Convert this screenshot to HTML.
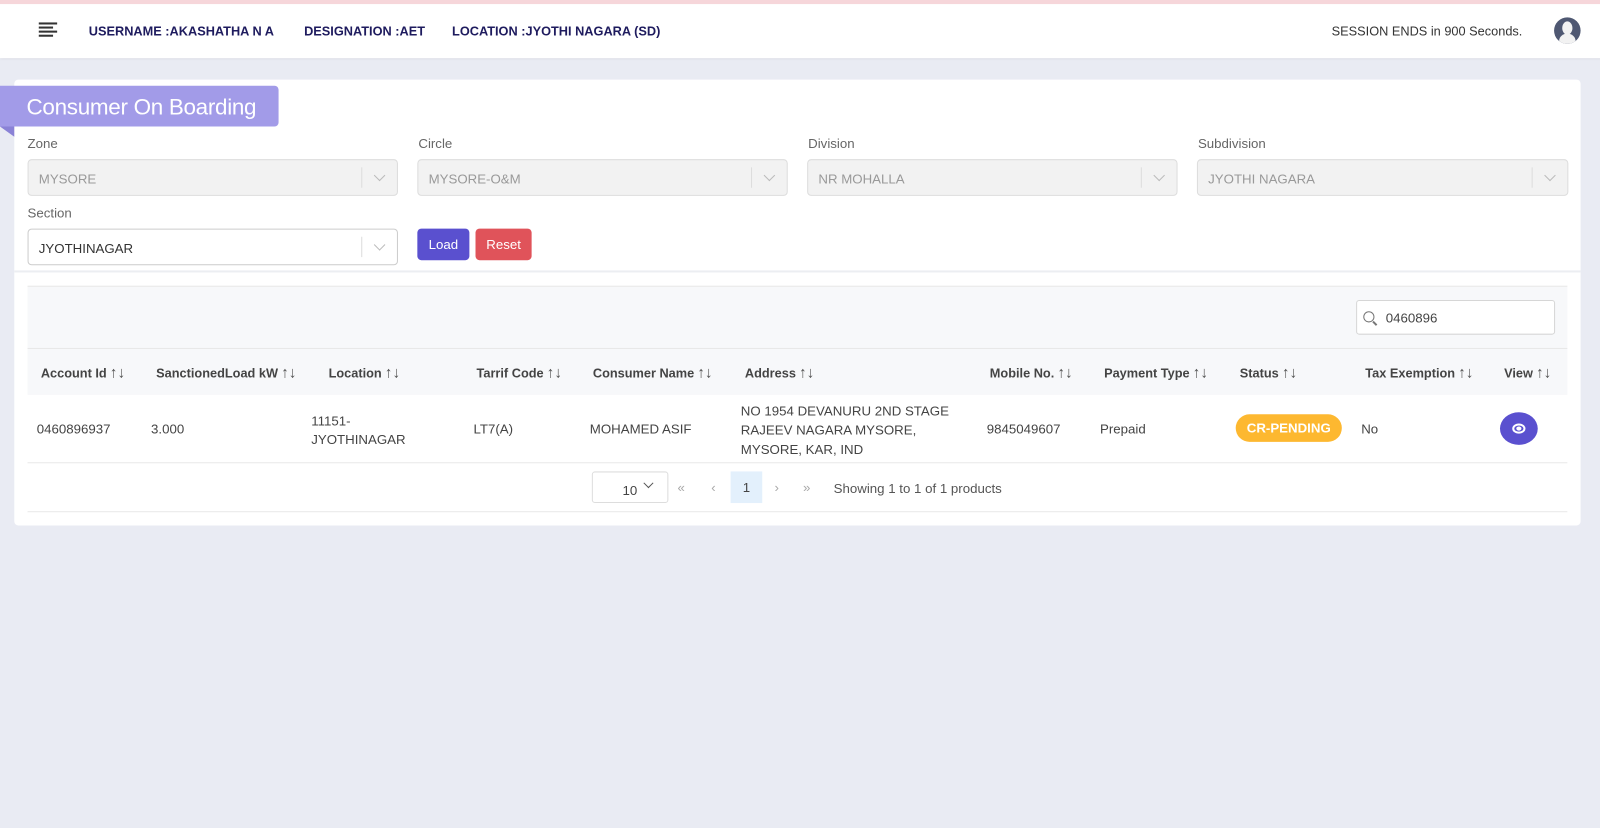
<!DOCTYPE html>
<html><head><meta charset="utf-8"><style>
*{box-sizing:border-box;margin:0;padding:0}
body{width:1600px;height:827px;background:#e9ebf3;font-family:"Liberation Sans",sans-serif;position:relative;overflow:hidden;font-size:13px;color:#333}
#w{position:absolute;left:0;top:0;width:1568px;height:811px;transform:scale(1.0204);transform-origin:0 0}
.a{position:absolute}
.hdr{left:0;top:0;width:1600px;height:57px;background:#fff;border-top:4px solid #f6d6da;box-shadow:0 1px 3px rgba(0,0,0,.08)}
.nav{font-weight:bold;color:#1e1b5e;font-size:12.5px;top:24px}
.card{left:14px;top:78px;width:1535px;height:437px;background:#fff;border-radius:4px}
.lbl{font-size:13px;color:#666}
.sel{height:36px;border:1px solid #ddd;border-radius:4px;background:#f2f2f2;color:#999;font-size:13px;padding:11px 10px}
.sel:after{content:"";position:absolute;right:34px;top:7px;width:1px;height:20px;background:#ddd}
.chev{position:absolute;right:13px;top:11px;width:8px;height:8px;border-right:1px solid #bbb;border-bottom:1px solid #bbb;transform:rotate(45deg)}
.th{top:357px;font-weight:bold;font-size:12.5px;color:#444}
.th b{font-size:15px;font-weight:normal;color:#555;margin-left:3px}
.td{font-size:13px;color:#444}
</style></head><body><div id="w">
<div class="a hdr"></div>
<div class="a" style="left:38px;top:22px;width:18px">
<div style="height:2px;background:#333;margin-bottom:2px"></div><div style="height:2px;background:#333;width:14px;margin-bottom:2px"></div><div style="height:2px;background:#333;margin-bottom:2px"></div><div style="height:2px;background:#333;width:14px"></div></div>
<div class="a nav" style="left:87px">USERNAME :AKASHATHA N A</div>
<div class="a nav" style="left:298px">DESIGNATION :AET</div>
<div class="a nav" style="left:443px">LOCATION :JYOTHI NAGARA (SD)</div>
<div class="a" style="left:1305px;top:24px;font-size:12.5px;color:#333">SESSION ENDS in 900 Seconds.</div>
<div class="a" style="left:1523px;top:17px;width:26px;height:26px;border-radius:50%;background:#4f5872;overflow:hidden"><div class="a" style="left:8px;top:4px;width:10px;height:13px;border-radius:50%;background:#f2f2f2"></div><div class="a" style="left:5px;top:16px;width:16px;height:14px;border-radius:50% 50% 0 0;background:#f2f2f2"></div></div>

<div class="a card"></div>
<div class="a" style="left:0;top:84px;width:273px;height:40px;background:#a29be8;border-radius:0 4px 4px 0;color:#fff;font-size:22px;padding:8px 0 0 26px;letter-spacing:-0.3px">Consumer On Boarding</div>
<div class="a" style="left:0;top:124px;width:0;height:0;border-top:10px solid #8a82d6;border-left:14px solid transparent"></div>

<div class="a lbl" style="left:27px;top:133px">Zone</div>
<div class="a lbl" style="left:410px;top:133px">Circle</div>
<div class="a lbl" style="left:792px;top:133px">Division</div>
<div class="a lbl" style="left:1174px;top:133px">Subdivision</div>
<div class="a sel" style="left:27px;top:156px;width:363px">MYSORE<i class="chev"></i></div>
<div class="a sel" style="left:409px;top:156px;width:363px">MYSORE-O&amp;M<i class="chev"></i></div>
<div class="a sel" style="left:791px;top:156px;width:363px">NR MOHALLA<i class="chev"></i></div>
<div class="a sel" style="left:1173px;top:156px;width:364px">JYOTHI NAGARA<i class="chev"></i></div>
<div class="a lbl" style="left:27px;top:201px">Section</div>
<div class="a sel" style="left:27px;top:224px;width:363px;background:#fff;border-color:#ccc;color:#333">JYOTHINAGAR<i class="chev"></i></div>
<div class="a" style="left:409px;top:224px;width:51px;height:31px;background:#5a50cf;border-radius:4px;color:#fff;font-size:13px;text-align:center;line-height:31px">Load</div>
<div class="a" style="left:466px;top:224px;width:55px;height:31px;background:#e0535a;border-radius:4px;color:#fff;font-size:13px;text-align:center;line-height:31px">Reset</div>
<div class="a" style="left:14px;top:265px;width:1535px;height:2px;background:#eceef2"></div>

<div class="a" style="left:27px;top:280px;width:1509px;height:107px;background:#f7f8fa;border-top:1px solid #e8e8e8"></div>
<div class="a" style="left:27px;top:341px;width:1509px;height:1px;background:#e8e8e8"></div>
<div class="a" style="left:1329px;top:294px;width:195px;height:34px;background:#fff;border:1px solid #d6d6d6;border-radius:3px"></div>
<div class="a" style="left:1336px;top:305px;width:11px;height:11px;border:1.5px solid #777;border-radius:50%"></div>
<div class="a" style="left:1345px;top:316px;width:5px;height:1.5px;background:#777;transform:rotate(45deg)"></div>
<div class="a" style="left:1358px;top:304px;font-size:13px;color:#444">0460896</div>

<div class="a th" style="left:40px">Account Id<b>↑↓</b></div>
<div class="a th" style="left:153px">SanctionedLoad kW<b>↑↓</b></div>
<div class="a th" style="left:322px">Location<b>↑↓</b></div>
<div class="a th" style="left:467px">Tarrif Code<b>↑↓</b></div>
<div class="a th" style="left:581px">Consumer Name<b>↑↓</b></div>
<div class="a th" style="left:730px">Address<b>↑↓</b></div>
<div class="a th" style="left:970px">Mobile No.<b>↑↓</b></div>
<div class="a th" style="left:1082px">Payment Type<b>↑↓</b></div>
<div class="a th" style="left:1215px">Status<b>↑↓</b></div>
<div class="a th" style="left:1338px">Tax Exemption<b>↑↓</b></div>
<div class="a th" style="left:1474px">View<b>↑↓</b></div>

<div class="a td" style="left:36px;top:413px">0460896937</div>
<div class="a td" style="left:148px;top:413px">3.000</div>
<div class="a td" style="left:305px;top:404px;line-height:18px">11151-<br>JYOTHINAGAR</div>
<div class="a td" style="left:464px;top:413px">LT7(A)</div>
<div class="a td" style="left:578px;top:413px">MOHAMED ASIF</div>
<div class="a td" style="left:726px;top:393px;line-height:19px">NO 1954 DEVANURU 2ND STAGE<br>RAJEEV NAGARA MYSORE,<br>MYSORE, KAR, IND</div>
<div class="a td" style="left:967px;top:413px">9845049607</div>
<div class="a td" style="left:1078px;top:413px">Prepaid</div>
<div class="a" style="left:1211px;top:406px;width:104px;height:27px;background:#fdb830;border-radius:14px;color:#fff;font-weight:bold;font-size:13px;text-align:center;line-height:27px">CR-PENDING</div>
<div class="a td" style="left:1334px;top:413px">No</div>
<div class="a" style="left:1470px;top:404px;width:37px;height:32px;border-radius:50%;background:#5a50cf"><div class="a" style="left:12px;top:11px;width:13px;height:10px;border:2px solid #fff;border-radius:50%"></div><div class="a" style="left:16px;top:14px;width:5px;height:4px;background:#fff;border-radius:50%"></div></div>
<div class="a" style="left:27px;top:453px;width:1509px;height:1px;background:#e8e8e8"></div>

<div class="a" style="left:580px;top:462px;width:75px;height:31px;border:1px solid #ddd;border-radius:3px;font-size:13px;padding:10px 0 0 29px;color:#444">10</div>
<div class="a" style="left:632px;top:470px;width:7px;height:7px;border-right:1.5px solid #555;border-bottom:1.5px solid #555;transform:rotate(45deg)"></div>
<div class="a" style="left:664px;top:470px;color:#aaa;font-size:13px">«</div>
<div class="a" style="left:697px;top:470px;color:#aaa;font-size:13px">‹</div>
<div class="a" style="left:716px;top:462px;width:31px;height:31px;background:#e3f0fc;color:#444;text-align:center;line-height:31px;font-size:13px">1</div>
<div class="a" style="left:759px;top:470px;color:#aaa;font-size:13px">›</div>
<div class="a" style="left:787px;top:470px;color:#aaa;font-size:13px">»</div>
<div class="a" style="left:817px;top:471px;color:#555;font-size:13px">Showing 1 to 1 of 1 products</div>
<div class="a" style="left:27px;top:501px;width:1509px;height:1px;background:#e8e8e8"></div>
</div></body></html>
